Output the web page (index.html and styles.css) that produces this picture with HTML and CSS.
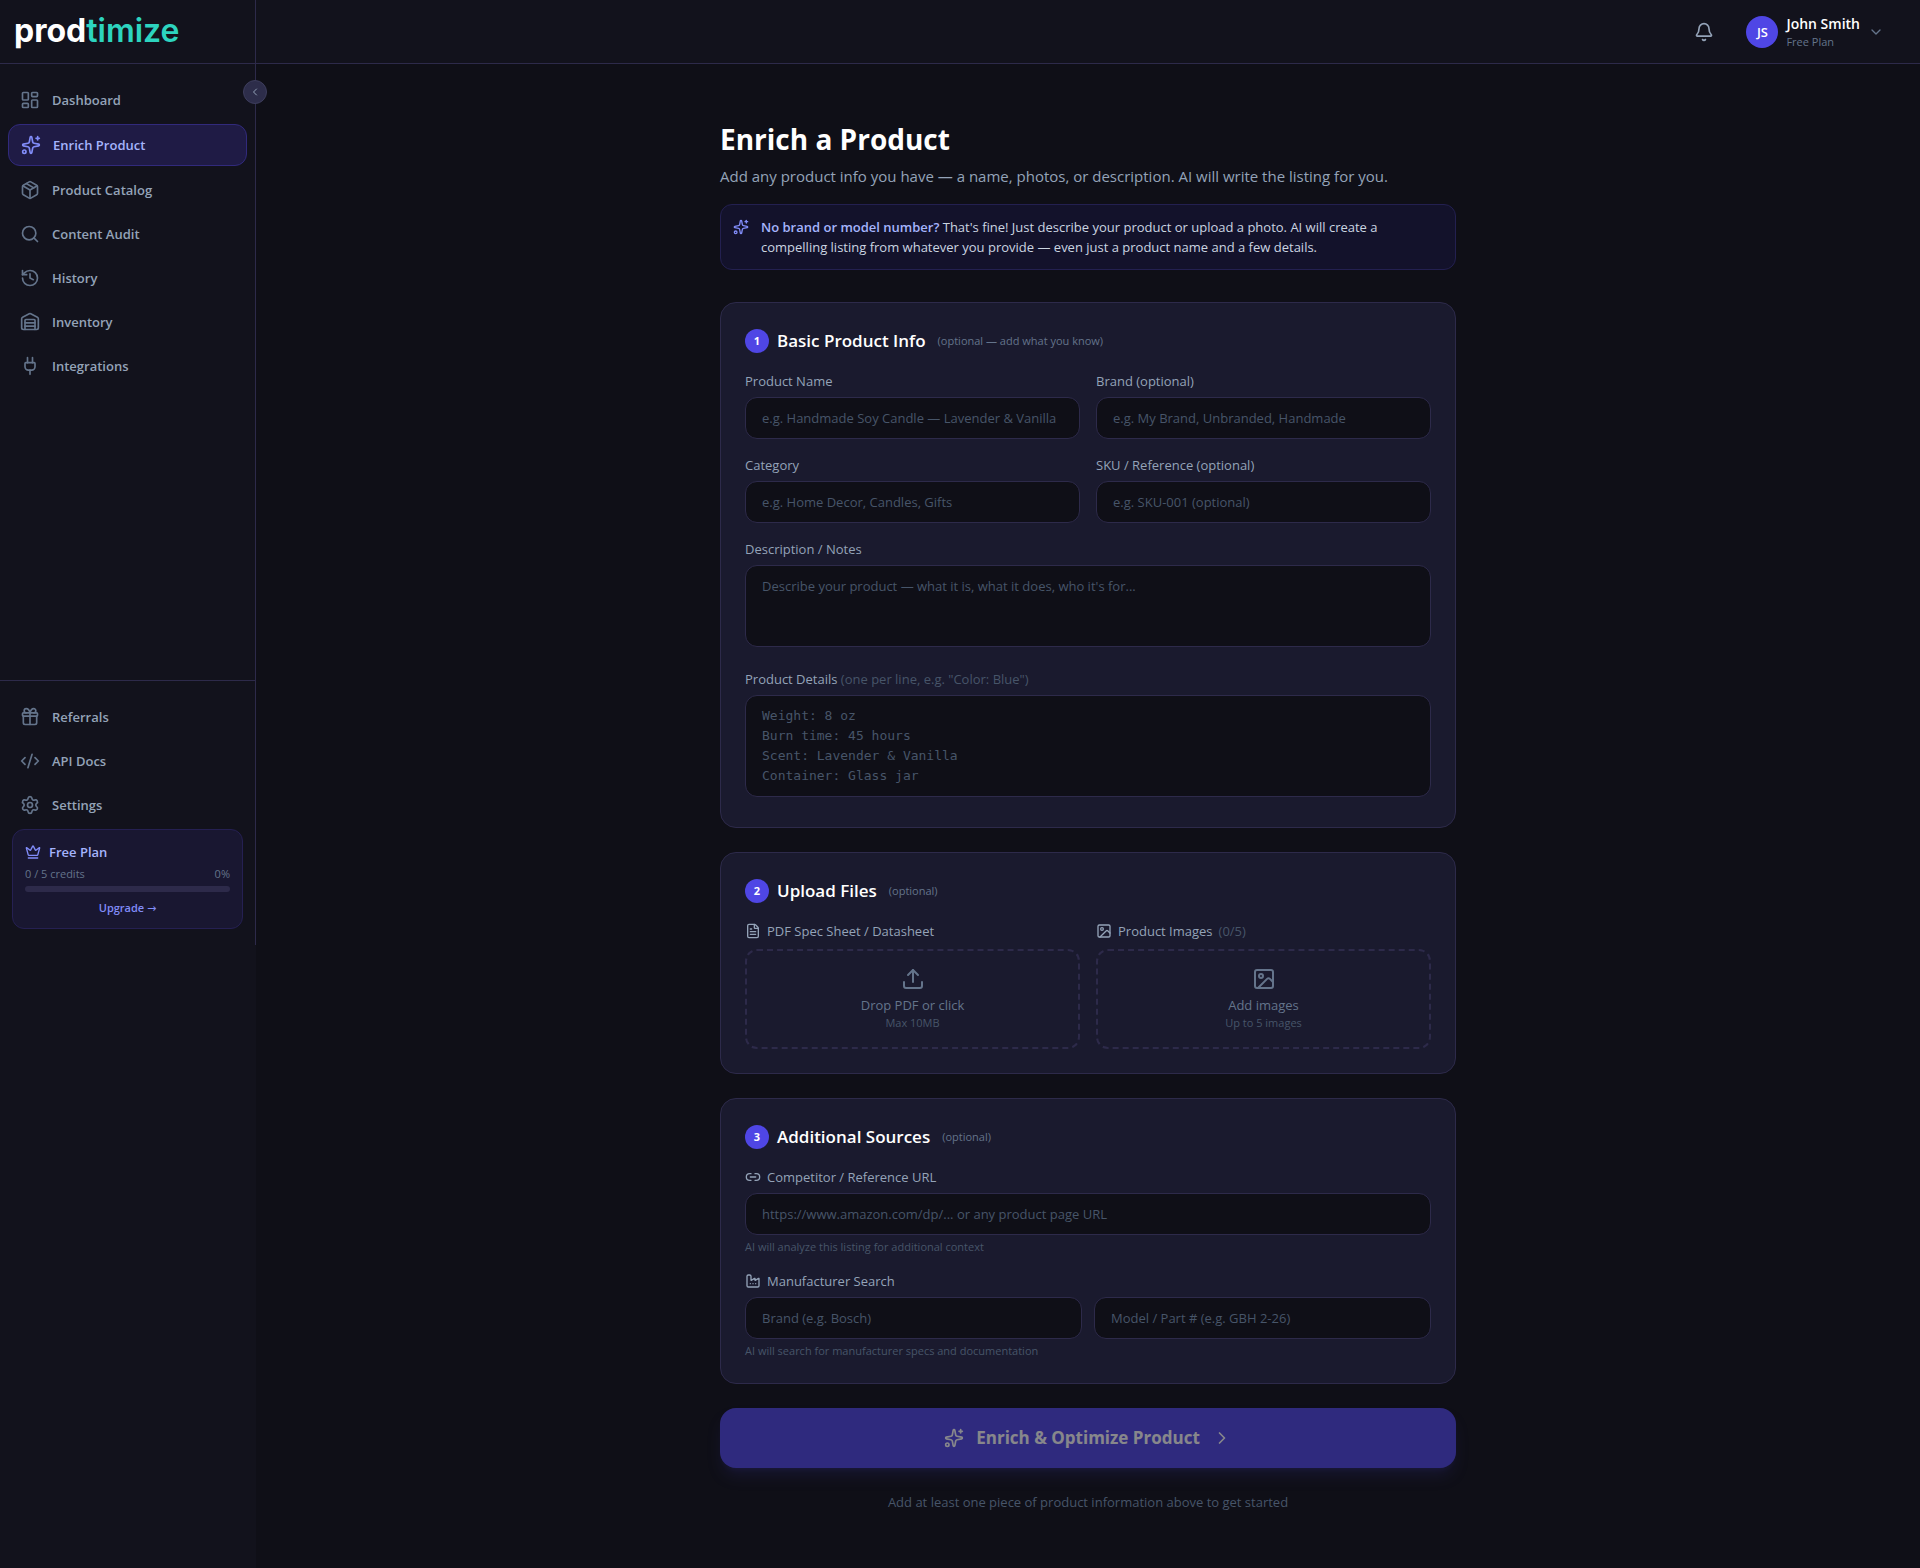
FILE: index.html
```html
<!DOCTYPE html>
<html lang="en">
<head>
<meta charset="utf-8">
<meta name="viewport" content="width=device-width, initial-scale=1">
<title>Enrich a Product</title>
<link rel="stylesheet" href="styles.css">
</head>
<body>
<svg class="sprite" aria-hidden="true">
  <symbol id="i-dashboard" viewBox="0 0 24 24"><rect width="7" height="9" x="3" y="3" rx="1"/><rect width="7" height="5" x="14" y="3" rx="1"/><rect width="7" height="9" x="14" y="12" rx="1"/><rect width="7" height="5" x="3" y="16" rx="1"/></symbol>
  <symbol id="i-sparkles" viewBox="0 0 24 24"><path d="M11.017 2.814a1 1 0 0 1 1.966 0l1.051 5.558a2 2 0 0 0 1.594 1.594l5.558 1.051a1 1 0 0 1 0 1.966l-5.558 1.051a2 2 0 0 0-1.594 1.594l-1.051 5.558a1 1 0 0 1-1.966 0l-1.051-5.558a2 2 0 0 0-1.594-1.594l-5.558-1.051a1 1 0 0 1 0-1.966l5.558-1.051a2 2 0 0 0 1.594-1.594z"/><path d="M20 2v4"/><path d="M22 4h-4"/><circle cx="4" cy="20" r="2"/></symbol>
  <symbol id="i-package" viewBox="0 0 24 24"><path d="M11 21.73a2 2 0 0 0 2 0l7-4A2 2 0 0 0 21 16V8a2 2 0 0 0-1-1.73l-7-4a2 2 0 0 0-2 0l-7 4A2 2 0 0 0 3 8v8a2 2 0 0 0 1 1.73z"/><path d="M12 22V12"/><path d="M3.29 7 12 12l8.71-5"/><path d="m7.5 4.27 9 5.15"/></symbol>
  <symbol id="i-search" viewBox="0 0 24 24"><path d="m21 21-4.34-4.34"/><circle cx="11" cy="11" r="8"/></symbol>
  <symbol id="i-history" viewBox="0 0 24 24"><path d="M3 12a9 9 0 1 0 9-9 9.75 9.75 0 0 0-6.74 2.74L3 8"/><path d="M3 3v5h5"/><path d="M12 7v5l4 2"/></symbol>
  <symbol id="i-warehouse" viewBox="0 0 24 24"><path d="M18 21V10a1 1 0 0 0-1-1H7a1 1 0 0 0-1 1v11"/><path d="M22 19a2 2 0 0 1-2 2H4a2 2 0 0 1-2-2V8a2 2 0 0 1 1.132-1.803l7.95-3.974a2 2 0 0 1 1.837 0l7.948 3.974A2 2 0 0 1 22 8z"/><path d="M6 13h12"/><path d="M6 17h12"/></symbol>
  <symbol id="i-plug" viewBox="0 0 24 24"><path d="M12 22v-5"/><path d="M15 8V2"/><path d="M17 8a1 1 0 0 1 1 1v4a4 4 0 0 1-4 4h-4a4 4 0 0 1-4-4V9a1 1 0 0 1 1-1z"/><path d="M9 8V2"/></symbol>
  <symbol id="i-gift" viewBox="0 0 24 24"><path d="M12 7v14"/><path d="M20 11v8a2 2 0 0 1-2 2H6a2 2 0 0 1-2-2v-8"/><path d="M7.5 7a1 1 0 0 1 0-5A4.8 8 0 0 1 12 7a4.8 8 0 0 1 4.5-5 1 1 0 0 1 0 5"/><rect x="3" y="7" width="18" height="4" rx="1"/></symbol>
  <symbol id="i-code" viewBox="0 0 24 24"><path d="m18 16 4-4-4-4"/><path d="m6 8-4 4 4 4"/><path d="m14.5 4-5 16"/></symbol>
  <symbol id="i-settings" viewBox="0 0 24 24"><path d="M9.671 4.136a2.34 2.34 0 0 1 4.659 0 2.34 2.34 0 0 0 3.319 1.915 2.34 2.34 0 0 1 2.33 4.033 2.34 2.34 0 0 0 0 3.831 2.34 2.34 0 0 1-2.33 4.033 2.34 2.34 0 0 0-3.319 1.915 2.34 2.34 0 0 1-4.659 0 2.34 2.34 0 0 0-3.32-1.915 2.34 2.34 0 0 1-2.33-4.033 2.34 2.34 0 0 0 0-3.831A2.34 2.34 0 0 1 6.35 6.051a2.34 2.34 0 0 0 3.319-1.915"/><circle cx="12" cy="12" r="3"/></symbol>
  <symbol id="i-crown" viewBox="0 0 24 24"><path d="M11.562 3.266a.5.5 0 0 1 .876 0L15.39 8.87a1 1 0 0 0 1.516.294L21.183 5.5a.5.5 0 0 1 .798.519l-2.834 10.246a1 1 0 0 1-.956.734H5.81a1 1 0 0 1-.957-.734L2.02 6.02a.5.5 0 0 1 .798-.519l4.276 3.664a1 1 0 0 0 1.516-.294z"/><path d="M5 21h14"/></symbol>
  <symbol id="i-bell" viewBox="0 0 24 24"><path d="M10.268 21a2 2 0 0 0 3.464 0"/><path d="M3.262 15.326A1 1 0 0 0 4 17h16a1 1 0 0 0 .74-1.673C19.41 13.956 18 12.499 18 8A6 6 0 0 0 6 8c0 4.499-1.411 5.956-2.738 7.326"/></symbol>
  <symbol id="i-file" viewBox="0 0 24 24"><path d="M6 22a2 2 0 0 1-2-2V4a2 2 0 0 1 2-2h8a2.4 2.4 0 0 1 1.704.706l3.588 3.588A2.4 2.4 0 0 1 20 8v12a2 2 0 0 1-2 2z"/><path d="M14 2v5a1 1 0 0 0 1 1h5"/><path d="M10 9H8"/><path d="M16 13H8"/><path d="M16 17H8"/></symbol>
  <symbol id="i-image" viewBox="0 0 24 24"><rect width="18" height="18" x="3" y="3" rx="2"/><circle cx="9" cy="9" r="2"/><path d="m21 15-3.086-3.086a2 2 0 0 0-2.828 0L6 21"/></symbol>
  <symbol id="i-upload" viewBox="0 0 24 24"><path d="M12 3v12"/><path d="m17 8-5-5-5 5"/><path d="M21 15v4a2 2 0 0 1-2 2H5a2 2 0 0 1-2-2v-4"/></symbol>
  <symbol id="i-link" viewBox="0 0 24 24"><path d="M9 17H7A5 5 0 0 1 7 7h2"/><path d="M15 7h2a5 5 0 1 1 0 10h-2"/><path d="M8 12h8"/></symbol>
  <symbol id="i-factory" viewBox="0 0 24 24"><path d="M12 16h.01"/><path d="M16 16h.01"/><path d="M3 19a2 2 0 0 0 2 2h14a2 2 0 0 0 2-2V8.5a.5.5 0 0 0-.769-.422l-4.462 2.844A.5.5 0 0 1 15 10.5v-2a.5.5 0 0 0-.769-.422L9.77 10.922A.5.5 0 0 1 9 10.5V5a2 2 0 0 0-2-2H5a2 2 0 0 0-2 2z"/><path d="M8 16h.01"/></symbol>
  <symbol id="i-left" viewBox="0 0 24 24"><path d="m15 18-6-6 6-6"/></symbol>
  <symbol id="i-right" viewBox="0 0 24 24"><path d="m9 18 6-6-6-6"/></symbol>
  <symbol id="i-down" viewBox="0 0 24 24"><path d="m6 9 6 6 6-6"/></symbol>
</svg>

<div class="app">
  <aside class="sidebar">
    <div class="sidebar-panel">
      <a class="logo" href="#"><span>prod</span><span class="logo-accent">timize</span></a>
      <button class="collapse" type="button" aria-label="Collapse sidebar"><svg class="icon icon-xs"><use href="#i-left"/></svg></button>
      <nav class="nav nav-primary" aria-label="Main">
        <a class="nav-item" href="#"><svg class="icon icon-md"><use href="#i-dashboard"/></svg>Dashboard</a>
        <a class="nav-item active" href="#" aria-current="page"><svg class="icon icon-md"><use href="#i-sparkles"/></svg>Enrich Product</a>
        <a class="nav-item" href="#"><svg class="icon icon-md"><use href="#i-package"/></svg>Product Catalog</a>
        <a class="nav-item" href="#"><svg class="icon icon-md"><use href="#i-search"/></svg>Content Audit</a>
        <a class="nav-item" href="#"><svg class="icon icon-md"><use href="#i-history"/></svg>History</a>
        <a class="nav-item" href="#"><svg class="icon icon-md"><use href="#i-warehouse"/></svg>Inventory</a>
        <a class="nav-item" href="#"><svg class="icon icon-md"><use href="#i-plug"/></svg>Integrations</a>
      </nav>
      <nav class="nav nav-secondary" aria-label="Account">
        <a class="nav-item" href="#"><svg class="icon icon-md"><use href="#i-gift"/></svg>Referrals</a>
        <a class="nav-item" href="#"><svg class="icon icon-md"><use href="#i-code"/></svg>API Docs</a>
        <a class="nav-item" href="#"><svg class="icon icon-md"><use href="#i-settings"/></svg>Settings</a>
        <section class="plan">
          <h2 class="plan-name"><svg class="icon icon-sm"><use href="#i-crown"/></svg>Free Plan</h2>
          <div class="plan-usage"><span>0 / 5 credits</span><span>0%</span></div>
          <div class="plan-bar"></div>
          <a class="plan-link" href="#">Upgrade <span class="arrow">→</span></a>
        </section>
      </nav>
    </div>
  </aside>

  <div class="content">
    <header class="topbar">
      <button class="bell" type="button" aria-label="Notifications"><svg class="icon icon-md"><use href="#i-bell"/></svg></button>
      <button class="profile" type="button">
        <span class="avatar">JS</span>
        <span class="who"><span class="who-name">John Smith</span><span class="who-plan">Free Plan</span></span>
        <svg class="icon icon-sm"><use href="#i-down"/></svg>
      </button>
    </header>

    <main class="page">
      <h1 class="title">Enrich a Product</h1>
      <p class="subtitle">Add any product info you have — a name, photos, or description. AI will write the listing for you.</p>

      <div class="callout">
        <svg class="icon icon-sm"><use href="#i-sparkles"/></svg>
        <p><strong>No brand or model number?</strong> That's fine! Just describe your product or upload a photo. AI will create a compelling listing from whatever you provide — even just a product name and a few details.</p>
      </div>

      <form class="form">
        <section class="card">
          <div class="card-head"><span class="step">1</span><h2>Basic Product Info</h2><span class="note">(optional — add what you know)</span></div>
          <div class="fields">
            <div class="field"><label for="name">Product Name</label><input id="name" type="text" placeholder="e.g. Handmade Soy Candle — Lavender &amp; Vanilla"></div>
            <div class="field"><label for="brand">Brand (optional)</label><input id="brand" type="text" placeholder="e.g. My Brand, Unbranded, Handmade"></div>
            <div class="field"><label for="category">Category</label><input id="category" type="text" placeholder="e.g. Home Decor, Candles, Gifts"></div>
            <div class="field"><label for="sku">SKU / Reference (optional)</label><input id="sku" type="text" placeholder="e.g. SKU-001 (optional)"></div>
            <div class="field wide"><label for="notes">Description / Notes</label><textarea id="notes" rows="3" placeholder="Describe your product — what it is, what it does, who it's for..."></textarea></div>
            <div class="field wide"><label for="details">Product Details <span class="dim">(one per line, e.g. "Color: Blue")</span></label><textarea id="details" class="mono" rows="4" placeholder="Weight: 8 oz&#10;Burn time: 45 hours&#10;Scent: Lavender &amp; Vanilla&#10;Container: Glass jar"></textarea></div>
          </div>
        </section>

        <section class="card">
          <div class="card-head"><span class="step">2</span><h2>Upload Files</h2><span class="note">(optional)</span></div>
          <div class="fields">
            <div class="upload">
              <label class="with-icon" for="pdf"><svg class="icon icon-sm"><use href="#i-file"/></svg>PDF Spec Sheet / Datasheet</label>
              <label class="dropzone"><input id="pdf" class="file" type="file" accept="application/pdf"><svg class="icon icon-lg"><use href="#i-upload"/></svg><span class="drop-text">Drop PDF or click</span><span class="drop-hint">Max 10MB</span></label>
            </div>
            <div class="upload">
              <label class="with-icon" for="images"><svg class="icon icon-sm"><use href="#i-image"/></svg>Product Images <span class="dim">(0/5)</span></label>
              <label class="dropzone"><input id="images" class="file" type="file" accept="image/*" multiple><svg class="icon icon-lg"><use href="#i-image"/></svg><span class="drop-text">Add images</span><span class="drop-hint">Up to 5 images</span></label>
            </div>
          </div>
        </section>

        <section class="card">
          <div class="card-head"><span class="step">3</span><h2>Additional Sources</h2><span class="note">(optional)</span></div>
          <div class="sources">
            <div class="field">
              <label class="with-icon" for="url"><svg class="icon icon-sm"><use href="#i-link"/></svg>Competitor / Reference URL</label>
              <input id="url" type="url" placeholder="https://www.amazon.com/dp/... or any product page URL">
              <p class="hint">AI will analyze this listing for additional context</p>
            </div>
            <div class="field">
              <label class="with-icon" for="maker"><svg class="icon icon-sm"><use href="#i-factory"/></svg>Manufacturer Search</label>
              <div class="pair">
                <input id="maker" type="text" placeholder="Brand (e.g. Bosch)">
                <input type="text" aria-label="Model or part number" placeholder="Model / Part # (e.g. GBH 2-26)">
              </div>
              <p class="hint">AI will search for manufacturer specs and documentation</p>
            </div>
          </div>
        </section>

        <button class="submit" type="submit" disabled><svg class="icon icon-md"><use href="#i-sparkles"/></svg>Enrich &amp; Optimize Product<svg class="icon icon-md"><use href="#i-right"/></svg></button>
        <p class="footnote">Add at least one piece of product information above to get started</p>
      </form>
    </main>
  </div>
</div>
</body>
</html>
```
FILE: styles.css
```css
:root {
  --bg: #0f0f17;
  --panel: #12121c;
  --card: #1a1a2e;
  --line: #2d2a4a;
  --accent: #4f46e5;
  --indigo: #818cf8;
  --indigo-light: #a5b4fc;
  --text: #94a3b8;
  --muted: #64748b;
  --dim: #475569;
}

* { box-sizing: border-box; }

body {
  margin: 0;
  background: var(--bg);
  color: var(--text);
  font-family: "Open Sans", "Noto Sans", sans-serif;
  font-size: 13px;
  line-height: 20px;
}

h1, h2, p { margin: 0; }
a { color: inherit; text-decoration: none; }
button, input, textarea { font: inherit; color: inherit; }
button { border: 0; padding: 0; background: none; }

.sprite { position: absolute; width: 0; height: 0; }

.icon {
  flex: none;
  fill: none;
  stroke: currentColor;
  stroke-width: 2;
  stroke-linecap: round;
  stroke-linejoin: round;
}
.icon-xs { width: 12px; height: 12px; }
.icon-sm { width: 16px; height: 16px; }
.icon-md { width: 20px; height: 20px; }
.icon-lg { width: 24px; height: 24px; }

.app { display: flex; min-height: 100vh; }

/* Sidebar */
.sidebar { flex: none; width: 256px; background: var(--panel); }
.sidebar-panel { position: relative; border-right: 1px solid var(--line); }

.logo {
  display: flex;
  align-items: center;
  height: 64px;
  padding: 0 14px 2px;
  border-bottom: 1px solid var(--line);
  color: #fff;
  font-family: Inter, sans-serif;
  font-size: 32px;
  font-weight: 700;
  line-height: 40px;
}
.logo-accent { color: #2dd4bf; font-weight: 600; }

.collapse {
  position: absolute;
  top: 80px;
  right: -12px;
  display: flex;
  align-items: center;
  justify-content: center;
  width: 24px;
  height: 24px;
  border: 1px solid #3d3d5c;
  border-radius: 50%;
  background: #2d2d4a;
  color: var(--text);
}

.nav { display: flex; flex-direction: column; gap: 4px; padding: 16px 8px; }
.nav-primary { min-height: 616px; }
.nav-secondary { border-top: 1px solid var(--line); }

.nav-item {
  display: flex;
  align-items: center;
  gap: 12px;
  padding: 10px 12px;
  border-radius: 12px;
  font-weight: 600;
}
.nav-item .icon { color: var(--muted); }
.nav-item.active {
  border: 1px solid #312a7c;
  background: #1f1b45;
  color: var(--indigo-light);
}
.nav-item.active .icon { color: var(--indigo); }

.plan {
  margin: 0 4px;
  padding: 12px;
  border: 1px solid #252052;
  border-radius: 12px;
  background: #191731;
}
.plan-name {
  display: flex;
  align-items: center;
  gap: 8px;
  margin-bottom: 4px;
  color: var(--indigo-light);
  font-size: 13px;
  font-weight: 600;
}
.plan-name .icon { color: var(--indigo); }
.plan-usage {
  display: flex;
  justify-content: space-between;
  margin-bottom: 4px;
  color: var(--muted);
  font-size: 11px;
  line-height: 16px;
}
.plan-bar { height: 6px; margin-bottom: 8px; border-radius: 3px; background: var(--line); }
.plan-link {
  display: block;
  color: var(--indigo);
  font-size: 11px;
  font-weight: 600;
  line-height: 16px;
  text-align: center;
}
.arrow { font-family: "DejaVu Sans", sans-serif; font-weight: 400; line-height: 1; }

/* Top bar */
.content { flex: 1; min-width: 0; }
.topbar {
  display: flex;
  align-items: center;
  justify-content: flex-end;
  gap: 12px;
  height: 64px;
  padding: 0 24px;
  border-bottom: 1px solid var(--line);
  background: var(--panel);
}
.bell { display: flex; padding: 8px; }
.profile { display: flex; align-items: center; gap: 8px; padding: 0 12px; text-align: left; }
.profile .icon { color: var(--muted); }
.avatar {
  display: flex;
  align-items: center;
  justify-content: center;
  width: 32px;
  height: 32px;
  border-radius: 50%;
  background: var(--accent);
  color: #fff;
  font-size: 13px;
  font-weight: 600;
}
.who { display: flex; flex-direction: column; }
.who-name { color: #fff; font-size: 14px; font-weight: 600; line-height: 20px; }
.who-plan { color: var(--muted); font-size: 11px; line-height: 16px; }

/* Page */
.page { max-width: 768px; margin: 0 auto; padding: 56px 16px; }
.title { color: #fff; font-size: 28px; font-weight: 700; line-height: 38px; }
.subtitle { margin-top: 6px; font-size: 15px; line-height: 24px; }

.callout {
  display: flex;
  gap: 12px;
  margin: 16px 0 32px;
  padding: 12px;
  border: 1px solid #232050;
  border-radius: 12px;
  background: #13122b;
  color: #cbd5e1;
}
.callout .icon { margin-top: 2px; color: var(--indigo); }
.callout strong { color: var(--indigo-light); font-weight: 600; }

.form { display: flex; flex-direction: column; gap: 24px; }
.card { padding: 24px; border: 1px solid var(--line); border-radius: 16px; background: var(--card); }
.card-head { display: flex; align-items: center; margin-bottom: 16px; }
.card-head h2 { margin: 0 12px 0 8px; color: #fff; font-size: 17px; font-weight: 600; line-height: 28px; }
.step {
  display: flex;
  align-items: center;
  justify-content: center;
  width: 24px;
  height: 24px;
  border-radius: 50%;
  background: var(--accent);
  color: #fff;
  font-size: 11px;
  font-weight: 700;
}
.note { color: var(--muted); font-size: 11px; line-height: 16px; }
.dim { color: var(--dim); }

.fields { display: grid; grid-template-columns: 1fr 1fr; gap: 16px; }
.sources { display: flex; flex-direction: column; gap: 16px; }
.wide { grid-column: 1 / -1; }
.field label { display: block; margin-bottom: 6px; }
.with-icon, .field .with-icon { display: flex; align-items: center; gap: 6px; }

input[type="text"], input[type="url"], textarea {
  display: block;
  width: 100%;
  padding: 10px 16px;
  border: 1px solid var(--line);
  border-radius: 12px;
  outline: 0;
  background: var(--bg);
}
textarea { margin-bottom: 6px; resize: none; overflow: hidden; }
::placeholder { color: var(--dim); opacity: 1; }
.mono { font-family: "DejaVu Sans Mono", monospace; }
.pair { display: grid; grid-template-columns: 1fr 1fr; gap: 12px; }
.hint { margin-top: 4px; color: var(--dim); font-size: 11px; line-height: 16px; }

.upload .with-icon { margin-bottom: 8px; }
.dropzone {
  position: relative;
  display: flex;
  flex-direction: column;
  align-items: center;
  padding: 16px;
  border: 2px dashed var(--line);
  border-radius: 12px;
  color: var(--muted);
}
.file { position: absolute; inset: 0; opacity: 0; }
.drop-text { margin-top: 4px; }
.drop-hint { color: var(--dim); font-size: 11px; line-height: 16px; }

.submit {
  display: flex;
  align-items: center;
  justify-content: center;
  gap: 12px;
  padding: 16px;
  border-radius: 16px;
  background: var(--accent);
  box-shadow: 0 10px 15px -3px rgba(79, 70, 229, 0.25), 0 4px 6px -4px rgba(79, 70, 229, 0.25);
  color: #fff;
  font-size: 17px;
  font-weight: 700;
  line-height: 28px;
  opacity: 0.5;
}
.footnote { color: var(--dim); text-align: center; }
```
